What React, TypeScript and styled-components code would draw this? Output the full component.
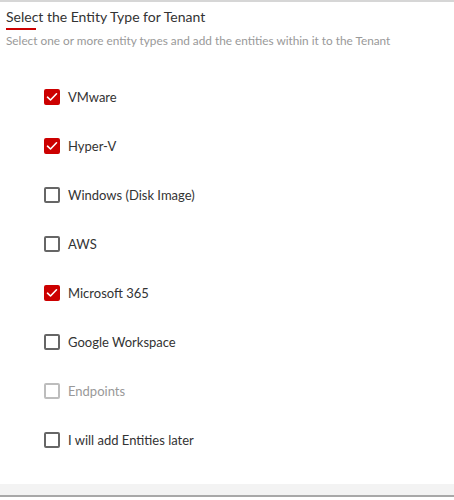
import { useState } from 'react';
import styled, { createGlobalStyle } from 'styled-components';

type EntityOption = {
  id: string;
  label: string;
  disabled?: boolean;
};

const OPTIONS: EntityOption[] = [
  { id: 'vmware', label: 'VMware' },
  { id: 'hyperv', label: 'Hyper-V' },
  { id: 'windows', label: 'Windows (Disk Image)' },
  { id: 'aws', label: 'AWS' },
  { id: 'm365', label: 'Microsoft 365' },
  { id: 'gws', label: 'Google Workspace' },
  { id: 'endpoints', label: 'Endpoints', disabled: true },
  { id: 'later', label: 'I will add Entities later' },
];

function App() {
  const [selected, setSelected] = useState<string[]>(['vmware', 'hyperv', 'm365']);

  const toggle = (id: string) => {
    setSelected((prev) => (prev.includes(id) ? prev.filter((x) => x !== id) : [...prev, id]));
  };

  return (
    <Root>
      <GlobalStyle />
      <Header>
        <Title>Select the Entity Type for Tenant</Title>
        <Underline />
        <Subtitle>Select one or more entity types and add the entities within it to the Tenant</Subtitle>
      </Header>
      <List>
        {OPTIONS.map((opt) => {
          const checked = selected.includes(opt.id);
          return (
            <Row key={opt.id} disabled={opt.disabled} onClick={() => !opt.disabled && toggle(opt.id)}>
              <Box checked={checked} disabled={opt.disabled}>
                {checked && (
                  <svg width="12" height="10" viewBox="0 0 12 10">
                    <path d="M1.5 5.2 L4.5 8 L10.5 1.8" fill="none" stroke="#fff" strokeWidth="1.6" strokeLinecap="round" strokeLinejoin="round" />
                  </svg>
                )}
              </Box>
              <Label disabled={opt.disabled}>{opt.label}</Label>
            </Row>
          );
        })}
      </List>
      <Footer />
    </Root>
  );
}

const GlobalStyle = createGlobalStyle`
  body {
    margin: 0;
    font-family: Lato, "Open Sans", sans-serif;
    background: #fff;
  }
`;

const Root = styled.div`
  width: 454px;
  height: 500px;
  display: flex;
  flex-direction: column;
  border-top: 2px solid #d6d6d6;
  box-sizing: border-box;
`;

const Header = styled.div`
  padding: 6px 6px 0;
`;

const Title = styled.h2`
  margin: 0;
  font-size: 14px;
  font-weight: 400;
  color: #333;
  line-height: 17px;
`;

const Underline = styled.div`
  width: 30px;
  height: 2px;
  background: #cc0000;
  margin-top: 3px;
`;

const Subtitle = styled.p`
  margin: 4px 0 0;
  font-size: 11.8px;
  color: #999;
  line-height: 14px;
`;

const List = styled.div`
  display: flex;
  flex-direction: column;
  gap: 31px;
  padding: 40px 0 0 44px;
  flex: 1;
`;

const Row = styled.label<{ disabled?: boolean }>`
  display: flex;
  align-items: center;
  gap: 8px;
  height: 18px;
  cursor: ${(p) => (p.disabled ? 'default' : 'pointer')};
`;

const Box = styled.span<{ checked: boolean; disabled?: boolean }>`
  width: 16px;
  height: 16px;
  box-sizing: border-box;
  border-radius: 2px;
  display: flex;
  align-items: center;
  justify-content: center;
  background: ${(p) => (p.checked ? '#cc0000' : '#fff')};
  border: 2px solid ${(p) => (p.checked ? '#cc0000' : p.disabled ? '#bdbdbd' : '#666')};
`;

const Label = styled.span<{ disabled?: boolean }>`
  font-size: 13px;
  color: ${(p) => (p.disabled ? '#999' : '#333')};
`;

const Footer = styled.div`
  height: 11px;
  background: #f3f3f3;
  border-bottom: 2px solid #a8a8a8;
  margin-bottom: 3px;
`;

export default App;
